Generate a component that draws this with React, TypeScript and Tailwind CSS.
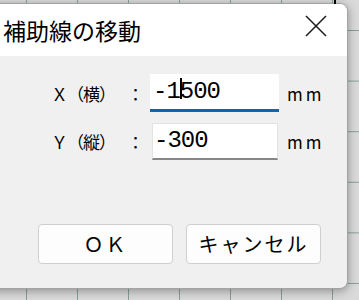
const jp = "font-['Noto_Sans_CJK_JP',sans-serif]"
const mono = "font-['Liberation_Mono',monospace] text-[24px] tracking-[-1px] leading-none"

const CloseIcon = () => (
  <svg width="22" height="22" viewBox="0 0 22 22" className="mb-[8px]">
    <path d="M1 1 L21 21 M21 1 L1 21" stroke="#1a1a1a" strokeWidth="1.5" fill="none" />
  </svg>
)

export default function App() {
  return (
    <div className="relative w-[359px] h-[300px] overflow-hidden bg-[#d9d9d9] bg-[linear-gradient(to_right,#87a293_1px,transparent_1px),linear-gradient(to_bottom,#87a293_1px,transparent_1px)] bg-size-[51px_50.6px] bg-position-[26px_30px]">
      {/* stray canvas stroke peeking above the dialog */}
      <span className="absolute left-[334px] top-0 w-[2px] h-[4px] bg-black" />

      {/* Dialog */}
      <div className="ml-[-10px] mt-[3px] w-[358px] h-[286px] rounded-[8px] overflow-hidden border border-[#a3a3a3] bg-[#f0f0f0] shadow-[0_2px_10px_rgba(0,0,0,0.35)] flex flex-col">
        {/* Title bar */}
        <div className="h-[52px] bg-white flex items-center justify-between pl-[12px] pr-[20px]">
          <span className={`${jp} text-[23px] leading-none text-black`}>補助線の移動</span>
          <CloseIcon />
        </div>

        {/* Body */}
        <div className={`flex-1 flex flex-col pt-[18px] ${jp} text-black`}>
          {/* X row */}
          <div className="flex items-center h-[38px]">
            <span className="pl-[60px] text-[17px] tracking-[-1px] leading-none">Ｘ（横）</span>
            <span className="ml-[12px] text-[17px] leading-none">：</span>
            <div className="ml-[6px] w-[129px] h-[38px] bg-white border-b-[3px] border-[#0067c0] flex items-center pl-[3px]">
              <span className={mono}>
                -1
                <span className="relative inline-block w-0 h-[1px]">
                  <span className="absolute left-[0px] top-[-19px] w-[2px] h-[21px] bg-black" />
                </span>
                500
              </span>
            </div>
            <span className="ml-[8px] text-[17px] tracking-[3px] leading-none">mm</span>
          </div>

          {/* Y row */}
          <div className="flex items-center h-[37px] mt-[11px]">
            <span className="pl-[60px] text-[17px] tracking-[-1px] leading-none">Ｙ（縦）</span>
            <span className="ml-[12px] text-[17px] leading-none">：</span>
            <div className="ml-[8px] w-[126px] h-[37px] bg-white border border-[#e3e3e3] border-b-[2px] border-b-[#868686] flex items-center pl-[1px]">
              <span className={mono}>-300</span>
            </div>
            <span className="ml-[9px] text-[17px] tracking-[3px] leading-none">mm</span>
          </div>

          {/* Buttons */}
          <div className="flex justify-end gap-[13px] pr-[26px] mt-[64px]">
            <button className="w-[135px] h-[40px] rounded-[4px] bg-[#fdfdfd] border border-[#cfcfcf] text-[20px] leading-none tracking-[2px]">
              ＯＫ
            </button>
            <button className="w-[135px] h-[40px] rounded-[4px] bg-[#fdfdfd] border border-[#cfcfcf] text-[20px] leading-none tracking-[2px]">
              キャンセル
            </button>
          </div>
        </div>
      </div>
    </div>
  )
}
